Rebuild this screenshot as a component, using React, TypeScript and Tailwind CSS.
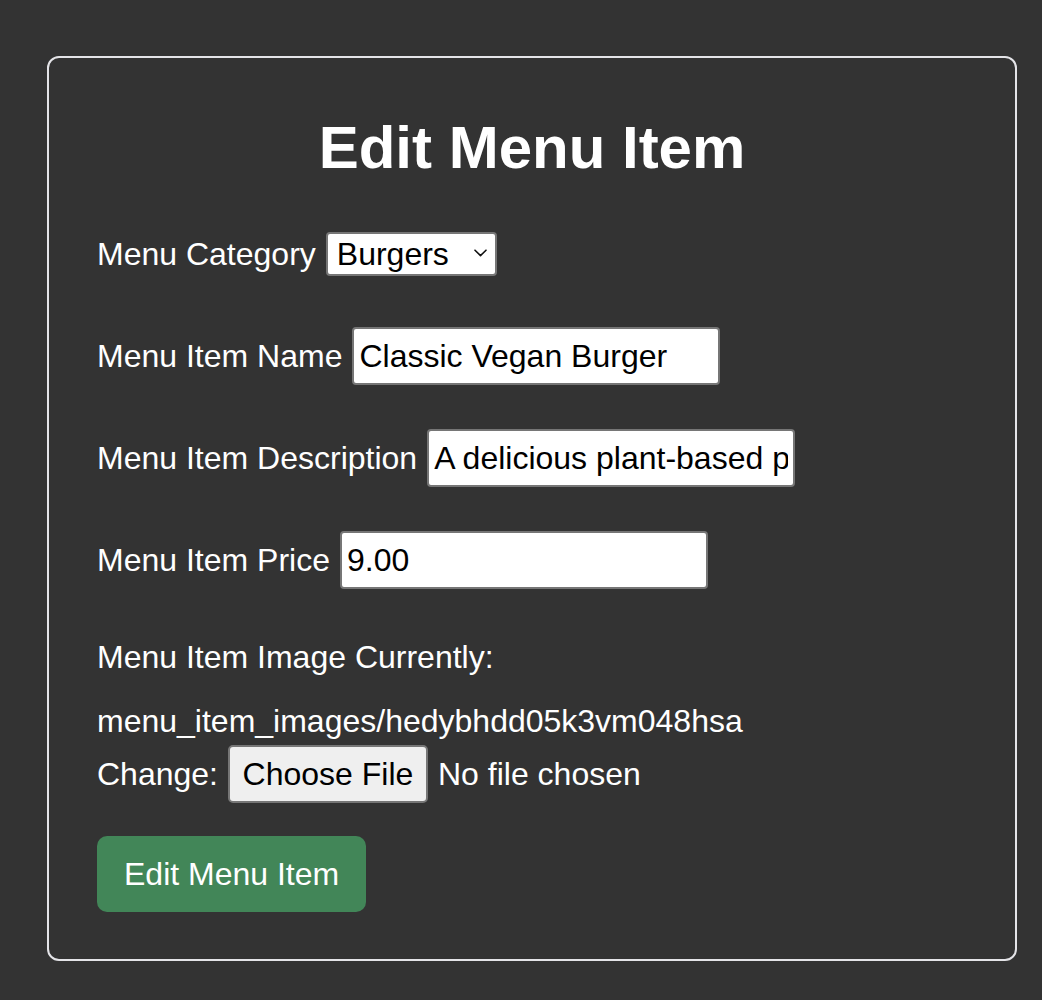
import React from 'react';

const font = { fontFamily: '"Liberation Sans", Arial, sans-serif' };

function Row({ label, children }: { label: string; children: React.ReactNode }) {
  return (
    <div className="flex h-[58px] items-center gap-[10px]">
      <label className="whitespace-nowrap text-[32px] leading-[40px] text-white">{label}</label>
      {children}
    </div>
  );
}

function TextField({ value, width = 'w-[368px]' }: { value: string; width?: string }) {
  return (
    <input
      type="text"
      defaultValue={value}
      className={`${width} h-[58px] rounded-[4px] border-2 border-[#767676] bg-white px-[5px] text-[32px] text-black outline-none`}
      style={font}
    />
  );
}

export default function App() {
  return (
    <div className="min-h-[1000px] w-full bg-[#333333] pt-[56px] pl-[47px]" style={font}>
      <div className="w-[970px] rounded-[12px] border-2 border-[#e4e4e8] px-[48px] pt-[58px] pb-[47px]">
        <h1 className="h-[64px] text-center text-[60px] font-semibold leading-[64px] text-white">Edit Menu Item</h1>

        <form className="flex flex-col" onSubmit={(e) => e.preventDefault()}>
          <div className="mt-[45px]">
            <Row label="Menu Category">
              <div className="relative">
                <select
                  defaultValue="Burgers"
                  className="h-[44px] w-[171px] appearance-none rounded-[4px] border-2 border-[#767676] bg-white pl-[9px] text-[32px] leading-[40px] text-black outline-none"
                  style={font}
                >
                  <option>Burgers</option>
                  <option>Sides</option>
                  <option>Drinks</option>
                </select>
                <svg
                  className="pointer-events-none absolute right-[10px] top-[17px]"
                  width="13"
                  height="8"
                  viewBox="0 0 13 8"
                  fill="none"
                  stroke="#111"
                  strokeWidth="1.6"
                  strokeLinecap="round"
                  strokeLinejoin="round"
                >
                  <path d="M1 1.2 L6.5 6.6 L12 1.2" />
                </svg>
              </div>
            </Row>
          </div>

          <div className="mt-[44px]">
            <Row label="Menu Item Name">
              <TextField value="Classic Vegan Burger" />
            </Row>
          </div>

          <div className="mt-[44px]">
            <Row label="Menu Item Description">
              <TextField value="A delicious plant-based patty with lettuce, tomato and vegan mayo" />
            </Row>
          </div>

          <div className="mt-[44px]">
            <Row label="Menu Item Price">
              <TextField value="9.00" />
            </Row>
          </div>

          <p className="mt-[48px] h-[40px] text-[32px] leading-[40px] text-white">Menu Item Image Currently:</p>
          <p className="mt-[24px] h-[40px] text-[32px] leading-[40px] text-white">menu_item_images/hedybhdd05k3vm048hsa</p>

          <div className="mt-[4px] flex h-[58px] items-center gap-[10px] text-[32px] text-white">
            <span>Change:</span>
            <button
              type="button"
              className="h-[58px] w-[200px] rounded-[5px] border-2 border-[#767676] bg-[#efefef] text-[32px] text-black"
              style={font}
            >
              Choose File
            </button>
            <span>No file chosen</span>
          </div>

          <div className="mt-[33px]">
            <button
              type="submit"
              className="h-[76px] rounded-[10px] bg-[#428658] px-[27px] text-[32px] text-white"
              style={font}
            >
              Edit Menu Item
            </button>
          </div>
        </form>
      </div>
    </div>
  );
}
